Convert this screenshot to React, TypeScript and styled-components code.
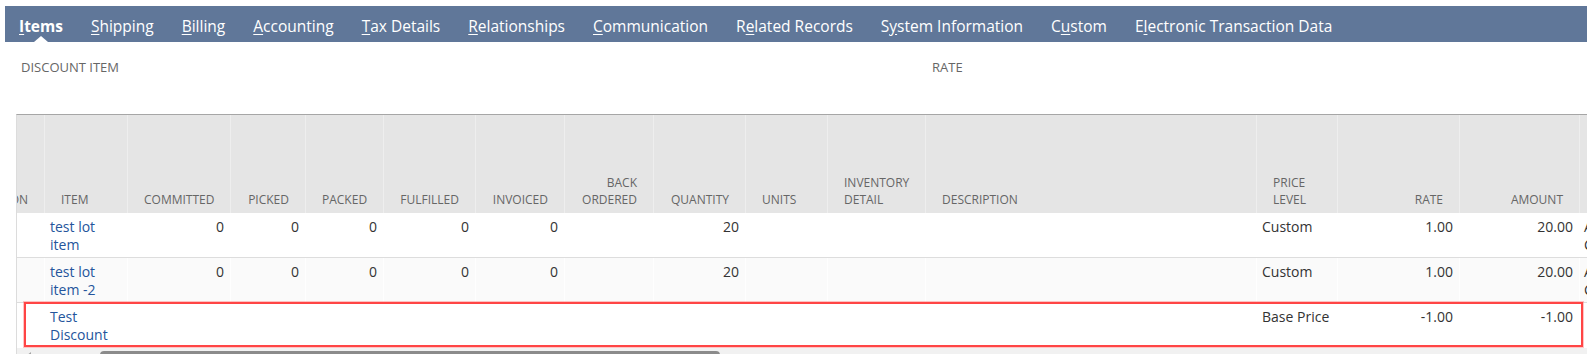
import styled, { createGlobalStyle, css } from 'styled-components'

const GlobalStyle = createGlobalStyle`
    body {
        margin: 0;
        background: #fff;
        font-family: "Open Sans", "Liberation Sans", sans-serif;
    }
`

const Page = styled.div`
    padding: 6px 0 0 5px;
    height: 354px;
    box-sizing: border-box;
    overflow: hidden;
`

const TabBar = styled.nav`
    height: 36px;
    background: #607799;
    display: flex;
    align-items: stretch;
`

const Tab = styled.a<{ $active?: boolean }>`
    position: relative;
    display: flex;
    align-items: center;
    padding: 3px 14px 0;
    color: #fff;
    font-size: 15.5px;
    font-weight: ${p => (p.$active ? 700 : 400)};
    white-space: nowrap;
    text-decoration: none;
    cursor: pointer;

    u {
        text-underline-offset: 2px;
    }

    ${p =>
        p.$active &&
        css`
            &::after {
                content: '';
                position: absolute;
                bottom: 0;
                left: 50%;
                margin-left: -7px;
                border-left: 7px solid transparent;
                border-right: 7px solid transparent;
                border-bottom: 6px solid #fff;
            }
        `}
`

const Fields = styled.div`
    display: grid;
    grid-template-columns: 911px 1fr;
    height: 72px;
    padding: 16px 0 0 16px;
    box-sizing: border-box;
`

const FieldLabel = styled.div`
    font-size: 13px;
    line-height: 18px;
    color: #666;
    text-transform: uppercase;
`

const Viewport = styled.div`
    margin-left: 11px;
    border-top: 1px solid #a6a6a6;
    border-left: 1px solid #dcdcdc;
    overflow: hidden;
`

// the sublist is scrolled sideways, first column is mostly out of view
const Sublist = styled.div`
    margin-left: -64px;
`

const HeaderRow = styled.div<{ $cols: string }>`
    display: grid;
    grid-template-columns: ${p => p.$cols};
    height: 98px;
    background: #e5e5e5;
`

const HeaderCell = styled.div<{ $align: string }>`
    display: flex;
    flex-direction: column;
    justify-content: flex-end;
    padding: 0 16px 5px;
    border-left: 1px solid #eeeeee;
    font-size: 12px;
    line-height: 17px;
    color: #666;
    text-align: ${p => p.$align};
    white-space: pre-line;
    overflow: hidden;

    &:first-child {
        border-left: none;
    }
`

const Row = styled.div<{ $cols: string; $alt?: boolean; $marked?: boolean }>`
    position: relative;
    display: grid;
    grid-template-columns: ${p => p.$cols};
    height: 45px;
    box-sizing: border-box;
    border-bottom: 1px solid #dddddd;
    background: ${p => (p.$alt ? '#fafafa' : '#fff')};

    ${p =>
        p.$marked &&
        css`
            border-bottom: none;

            &::after {
                content: '';
                position: absolute;
                top: -1px;
                bottom: 1px;
                left: 71px;
                right: 4px;
                border: 2px solid #ff4545;
                box-shadow: 0 0 0 1px rgba(255, 90, 90, 0.35);
                pointer-events: none;
            }
        `}
`

const Cell = styled.div<{ $align: string; $link?: boolean }>`
    padding: 5px 6px 0 5px;
    border-left: 1px solid rgba(255, 255, 255, 0.8);
    font-size: 14px;
    line-height: 18px;
    color: ${p => (p.$link ? '#24559c' : '#333')};
    text-align: ${p => p.$align};
    white-space: ${p => (p.$link ? 'normal' : 'nowrap')};
    overflow: hidden;

    &:first-child {
        border-left: none;
    }
`

const LastCell = styled(Cell)`
    padding-left: 4px;
    white-space: normal;
`

const ScrollTrack = styled.div`
    display: flex;
    align-items: flex-start;
    height: 12px;
    padding-top: 3px;
    background: #f1f1f1;
`

const ScrollArrow = styled.span`
    margin: 1px 0 0 9px;
    border-right: 5px solid #a3a3a3;
    border-top: 4px solid transparent;
    border-bottom: 4px solid transparent;
`

const ScrollThumb = styled.span`
    margin-left: 69px;
    width: 620px;
    height: 9px;
    border-radius: 4px;
    background: #8b8b8b;
`

const tabs = [
    { label: 'Items', key: 0 },
    { label: 'Shipping', key: 0 },
    { label: 'Billing', key: 0 },
    { label: 'Accounting', key: 0 },
    { label: 'Tax Details', key: 0 },
    { label: 'Relationships', key: 0 },
    { label: 'Communication', key: 0 },
    { label: 'Related Records', key: 1 },
    { label: 'System Information', key: 1 },
    { label: 'Custom', key: 1 },
    { label: 'Electronic Transaction Data', key: 1 },
]

const columns = [
    { id: 'loc', label: 'LOCATION', width: 91, align: 'right' },
    { id: 'item', label: 'ITEM', width: 83, align: 'left' },
    { id: 'committed', label: 'COMMITTED', width: 103, align: 'right' },
    { id: 'picked', label: 'PICKED', width: 75, align: 'right' },
    { id: 'packed', label: 'PACKED', width: 78, align: 'right' },
    { id: 'fulfilled', label: 'FULFILLED', width: 92, align: 'right' },
    { id: 'invoiced', label: 'INVOICED', width: 89, align: 'right' },
    { id: 'backordered', label: 'BACK\nORDERED', width: 89, align: 'right' },
    { id: 'quantity', label: 'QUANTITY', width: 92, align: 'right' },
    { id: 'units', label: 'UNITS', width: 82, align: 'left' },
    { id: 'inventory', label: 'INVENTORY\nDETAIL', width: 98, align: 'left' },
    { id: 'description', label: 'DESCRIPTION', width: 331, align: 'left' },
    { id: 'pricelevel', label: 'PRICE\nLEVEL', width: 81, align: 'left' },
    { id: 'rate', label: 'RATE', width: 122, align: 'right' },
    { id: 'amount', label: 'AMOUNT', width: 120, align: 'right' },
]

const gridCols = columns.map(c => c.width + 'px').join(' ') + ' 1fr'

type Line = Record<string, string>

const lines: Line[] = [
    {
        item: 'test lot item',
        committed: '0',
        picked: '0',
        packed: '0',
        fulfilled: '0',
        invoiced: '0',
        quantity: '20',
        pricelevel: 'Custom',
        rate: '1.00',
        amount: '20.00',
        tax: 'Avalara Code',
    },
    {
        item: 'test lot item -2',
        committed: '0',
        picked: '0',
        packed: '0',
        fulfilled: '0',
        invoiced: '0',
        quantity: '20',
        pricelevel: 'Custom',
        rate: '1.00',
        amount: '20.00',
        tax: 'Avalara Code',
    },
    {
        item: 'Test Discount',
        pricelevel: 'Base Price',
        rate: '-1.00',
        amount: '-1.00',
    },
]

export default function App() {
    return (
        <Page>
            <GlobalStyle />
            <TabBar>
                {tabs.map((t, i) => (
                    <Tab key={t.label} $active={i === 0}>
                        {t.label.slice(0, t.key)}
                        <u>{t.label[t.key]}</u>
                        {t.label.slice(t.key + 1)}
                    </Tab>
                ))}
            </TabBar>

            <Fields>
                <FieldLabel>Discount Item</FieldLabel>
                <FieldLabel>Rate</FieldLabel>
            </Fields>

            <Viewport>
                <Sublist>
                    <HeaderRow $cols={gridCols}>
                        {columns.map(c => (
                            <HeaderCell key={c.id} $align={c.align}>
                                {c.label}
                            </HeaderCell>
                        ))}
                        <HeaderCell $align="left" />
                    </HeaderRow>
                    {lines.map((line, i) => (
                        <Row key={i} $cols={gridCols} $alt={i === 1} $marked={i === 2}>
                            {columns.map(c => (
                                <Cell key={c.id} $align={c.align === 'right' ? 'right' : 'left'} $link={c.id === 'item'}>
                                    {line[c.id] ?? ''}
                                </Cell>
                            ))}
                            <LastCell $align="left">{line.tax ?? ''}</LastCell>
                        </Row>
                    ))}
                </Sublist>
                <ScrollTrack>
                    <ScrollArrow />
                    <ScrollThumb />
                </ScrollTrack>
            </Viewport>
        </Page>
    )
}
